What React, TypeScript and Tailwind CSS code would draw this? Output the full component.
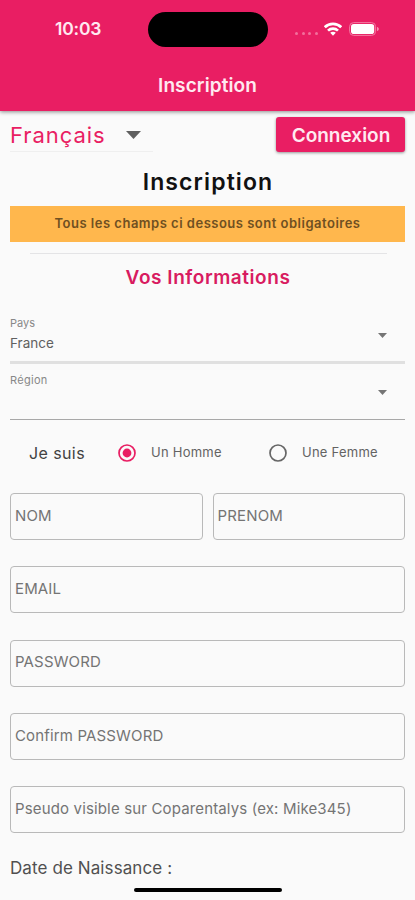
import React, { useState } from "react";

function Field({ label }: { label: string }) {
  return (
    <div className="h-[47px] flex-1 flex items-center rounded-[4px] border border-[#b9b9b9] pl-[4px] pb-[1px] text-[15px] tracking-[0.15px] text-[#747474]">
      {label}
    </div>
  );
}

function Radio({
  label,
  checked,
  onClick,
  className,
}: {
  label: string;
  checked: boolean;
  onClick: () => void;
  className: string;
}) {
  return (
    <button onClick={onClick} className={"flex items-center " + className}>
      <svg width="18" height="18" viewBox="0 0 18 18" fill="none">
        <circle
          cx="9"
          cy="9"
          r="8"
          stroke={checked ? "#e91e63" : "#666666"}
          strokeWidth="1.7"
        />
        {checked && <circle cx="9" cy="9" r="4.4" fill="#e91e63" />}
      </svg>
      <span className="ml-[15px] whitespace-nowrap text-[13px] tracking-[0.25px] text-[#636363]">
        {label}
      </span>
    </button>
  );
}

function Arrow({ className }: { className: string }) {
  return (
    <svg viewBox="0 0 10 5" fill="currentColor" preserveAspectRatio="none" className={className}>
      <path d="M0 0h10L5 5z" />
    </svg>
  );
}

export default function App() {
  const [gender, setGender] = useState("homme");

  return (
    <div className="h-[900px] w-[415px] overflow-hidden flex flex-col bg-[#fafafa] font-['Inter',sans-serif]">
      <header className="h-[111px] shrink-0 bg-[#e91e63] text-[#ffe9f0] shadow-[0_1px_4px_rgba(0,0,0,0.45)]">
        <div className="h-[58px] flex items-center">
          <span className="ml-[55px] w-[93px] text-[17.5px] font-semibold leading-none tracking-[-0.2px]">
            10:03
          </span>
          <div className="h-[35px] w-[120px] rounded-full bg-black" />
          <div className="ml-[27px] mt-[8px] flex gap-[3.5px]">
            <i className="size-[3px] rounded-full bg-[#f2709c]" />
            <i className="size-[3px] rounded-full bg-[#f2709c]" />
            <i className="size-[3px] rounded-full bg-[#f2709c]" />
            <i className="size-[3px] rounded-full bg-[#f2709c]" />
          </div>
          <svg
            width="18"
            height="14"
            viewBox="0 0 18 14"
            fill="none"
            stroke="#fff"
            strokeWidth="2.7"
            className="ml-[6px] -mt-[1px]">
            <path d="M.8 5.2C5.2.7 12.8.7 17.2 5.2" />
            <path d="M4 8.6c2.8-2.7 7.2-2.7 10 0" />
            <path d="M9 13.8 6.2 10.8c1.5-1.5 4.1-1.5 5.6 0z" fill="#fff" stroke="none" />
          </svg>
          <svg width="31" height="14" viewBox="0 0 31 14" className="ml-[7px] -mt-[1px]">
            <rect x=".6" y=".6" width="26" height="12.8" rx="4" fill="none" stroke="#f27aa2" />
            <rect x="2" y="2" width="23.2" height="10" rx="2.8" fill="#fff" />
            <path d="M28 5c2.4.6 2.4 3.4 0 4z" fill="#f58fb1" />
          </svg>
        </div>
        <h1 className="h-[53px] flex items-center justify-center pt-[1px] text-[19px] font-semibold leading-none tracking-[0.1px]">
          Inscription
        </h1>
      </header>

      <main className="px-[10px] flex flex-col">
        <div className="h-[51px] flex justify-between items-start pt-[6px]">
          <div className="h-[35px] w-[143px] flex items-center border-b border-[#efefef] pt-[2px] text-[22px] leading-none tracking-[0.95px] text-[#e91e63]">
            <span className="w-[116px]">Français</span>
            <Arrow className="w-[15px] h-[8px] text-[#5f5f5f]" />
          </div>
          <button className="h-[35px] w-[129px] rounded-[3px] bg-[#e91e63] pl-[1px] pt-[1px] text-[19px] font-semibold leading-none text-[#ffe9f0] shadow-[0_1px_3px_rgba(0,0,0,0.4)]">
            Connexion
          </button>
        </div>
        <h2 className="h-[44px] flex items-center justify-center pb-[3px] pl-px text-[23px] font-semibold leading-none tracking-[1.1px] text-[#111]">
          Inscription
        </h2>
        <div className="h-[36px] flex items-center justify-center bg-[#ffb74d] text-[13px] font-semibold tracking-[0.5px] text-[#6f5022]">
          Tous les champs ci dessous sont obligatoires
        </div>
        <div className="mt-[11px] ml-[20px] mr-[18px] h-px bg-[#e4e4e6]" />
        <h3 className="h-[46px] flex items-center justify-center pl-px text-[19px] font-semibold leading-none tracking-[0.55px] text-[#d81b60]">
          Vos Informations
        </h3>

        <div className="h-[64px] flex items-center justify-between border-b-[3px] border-[#e0e0e0]">
          <div className="pt-[5px]">
            <p className="text-[11px] leading-[19px] text-[#888]">Pays</p>
            <p className="text-[13.5px] leading-[20px] text-[#606060]">France</p>
          </div>
          <Arrow className="mr-[18px] mt-[9px] w-[9px] h-[5px] text-[#757575]" />
        </div>
        <div className="h-[56px] flex justify-between border-b border-[#a8a8a8]">
          <p className="pt-[7px] text-[11px] leading-[19px] tracking-[0.3px] text-[#888]">Région</p>
          <Arrow className="mr-[18px] mt-[26px] w-[9px] h-[5px] text-[#757575]" />
        </div>

        <div className="h-[66px] flex items-center">
          <span className="ml-[19px] w-[89px] text-[16px] tracking-[0.4px] text-[#424242]">
            Je suis
          </span>
          <Radio
            label="Un Homme"
            checked={gender === "homme"}
            onClick={() => setGender("homme")}
            className="w-[151px]"
          />
          <Radio
            label="Une Femme"
            checked={gender === "femme"}
            onClick={() => setGender("femme")}
            className=""
          />
        </div>

        <div className="mt-[7px] flex flex-col gap-[26.3px]">
          <div className="flex gap-[10px]">
            <Field label="NOM" />
            <Field label="PRENOM" />
          </div>
          <div className="flex">
            <Field label="EMAIL" />
          </div>
          <div className="flex">
            <Field label="PASSWORD" />
          </div>
          <div className="flex">
            <Field label="Confirm PASSWORD" />
          </div>
          <div className="flex">
            <Field label="Pseudo visible sur Coparentalys (ex: Mike345)" />
          </div>
        </div>
        <p className="mt-[23px] text-[17px] leading-[24px] tracking-[0.1px] text-[#505050]">
          Date de Naissance :
        </p>
      </main>
      <div className="mt-[8px] ml-[134px] h-[4px] w-[148px] shrink-0 rounded-full bg-black" />
    </div>
  );
}
